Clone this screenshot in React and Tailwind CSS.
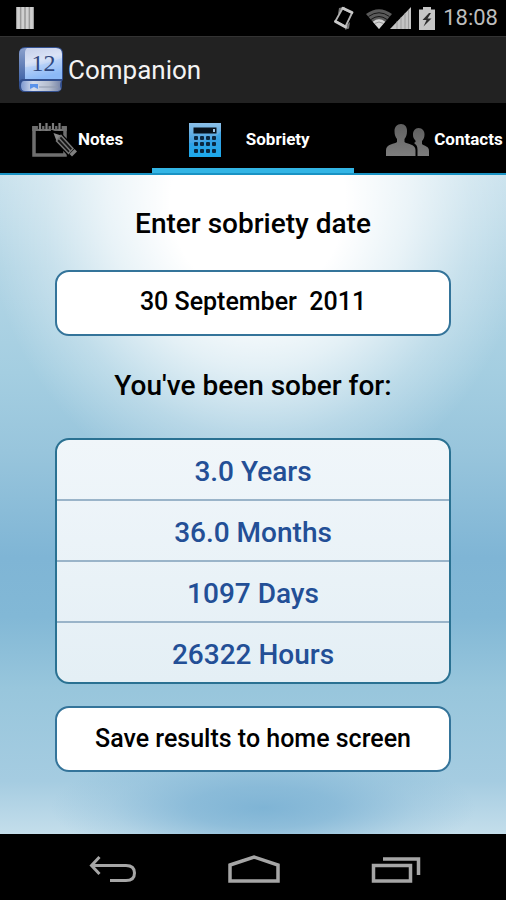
import { useState } from "react";

// ----------------- Data -----------------
const RESULTS = ["3.0 Years", "36.0 Months", "1097 Days", "26322 Hours"];

// ----------------- Status bar icons -----------------
const BarsIcon = () => (
  <svg viewBox="0 0 18 22" className="h-[22px] w-[18px]" aria-hidden="true">
    <rect width="18" height="22" fill="#9a9a9a" />
    <path d="M2.5 0v22M6.8 0v22M11.2 0v22M15.5 0v22" stroke="#d0d0d0" strokeWidth="2.8" />
  </svg>
);

const RotateIcon = () => (
  <svg viewBox="0 0 20 24" className="h-6 w-5" aria-hidden="true">
    <path d="M4 8 5 2l6-1.200L8 6zM16 16l-1 6.500-4 1.300 1-4z" fill="#777" />
    <path d="M8.500 2.500 18 7 11.500 20.500 1.500 15z" fill="#000" stroke="#b4b4b4" strokeWidth="1.800" strokeLinejoin="round" />
    <path d="M1.500 15.500 11.500 21M9 2.200 18 6.500" stroke="#cacaca" strokeWidth="2.800" strokeLinecap="round" />
  </svg>
);

const WifiIcon = () => (
  <svg viewBox="0 0 26 20" className="h-5 w-[26px]" aria-hidden="true">
    <path d="M0 5Q13-4.500 26 5L13 20z" fill="#5a5a5a" />
    <path d="M2.500 7.500Q13 0 23.500 7.500M5 10.500Q13 4.500 21 10.500" fill="none" stroke="#161616" strokeWidth="1" />
    <path d="M6.800 12.700Q13 8 19.200 12.700L13 20z" fill="#d4d4d4" />
    <path d="M8.500 14.500Q13 11.500 17.500 14.500" fill="none" stroke="#888" strokeWidth=".8" />
  </svg>
);

const SignalIcon = () => (
  <svg viewBox="0 0 21 22" className="-ml-0.5 h-[22px] w-[21px]" aria-hidden="true">
    <path d="M0 22 21 0v22z" fill="#c4c4c4" />
    <path d="M7 14.500V22M11 10.500V22M15 6.500V22M18.500 3V22" stroke="#9c9c9c" strokeWidth="1" />
  </svg>
);

const BatteryIcon = () => (
  <svg viewBox="0 0 16 23" className="h-[23px] w-4" aria-hidden="true">
    <path d="M4 0h8v2.500h4V23H0V2.500h4z" fill="#c6c6c6" />
    <path d="M10 6 3.500 13h4L4.500 19.500 12.500 11.500h-4L12 6z" fill="#2c2c2c" />
  </svg>
);

// ----------------- App and tab icons -----------------
const BookIcon = () => (
  <svg viewBox="0 0 46 46" className="h-[46px] w-[46px]" aria-hidden="true">
    <defs>
      <linearGradient id="cover" x1="0" y1="0" x2=".3" y2="1">
        <stop offset="0" stopColor="#c5cfea" />
        <stop offset=".45" stopColor="#dbe3f6" />
        <stop offset="1" stopColor="#8db9f5" />
      </linearGradient>
      <linearGradient id="spine" x1="0" y1="0" x2="0" y2="1">
        <stop offset="0" stopColor="#8ba0cc" />
        <stop offset="1" stopColor="#3f62a6" />
      </linearGradient>
      <linearGradient id="pages" x1="0" y1="0" x2="1" y2="0">
        <stop offset="0" stopColor="#7e98cf" />
        <stop offset=".3" stopColor="#d4dced" />
        <stop offset=".7" stopColor="#b4bccd" />
        <stop offset="1" stopColor="#7583a8" />
      </linearGradient>
    </defs>
    <path d="M7 0h31q7 0 7 7v25q-2 3-1 7 0 6-6 6H7q-6 0-6-6V7q0-7 6-7z" fill="#33508f" />
    <path d="M7 1h5v31H4q-2 0-3 3V7q0-6 6-6z" fill="url(#spine)" />
    <path d="M9 1h29q6 0 6 6v25H7V5q0-2 2-4z" fill="url(#cover)" />
    <path d="M9 20q18-2 35-9v21H7V20z" fill="#8cbcff" opacity=".25" />
    <path d="M6 34h37q-2 4 0 8-1 2-5 2H7q-4 0-4-5t3-5z" fill="url(#pages)" />
    <path d="M12 42v-5h8v5l-4-2z" fill="#5a92ea" />
    <path d="M21 40h19" stroke="#8f99ad" strokeWidth="1" />
    <text x="25.500" y="24" textAnchor="middle" fontSize="24" fill="#2f477f" className="font-['Liberation_Serif',serif]">
      12
    </text>
  </svg>
);

const NotesIcon = () => (
  <svg viewBox="0 0 46 34" className="h-[34px] w-[46px]" aria-hidden="true">
    <path d="M2 5h31v27H2z" fill="none" stroke="#6f6f6f" strokeWidth="3.500" />
    <path d="M.2 5.500h34.600" stroke="#6f6f6f" strokeWidth="5" />
    <path d="M8 0v6M14.500 0v6M21 0v6M27.500 0v6" stroke="#000" strokeWidth="4.200" />
    <path d="M8 0v8M14.500 0v8M21 0v8M27.500 0v8" stroke="#7c7c7c" strokeWidth="2.200" />
    <path d="M21 9 29 12 45 28 39 34 24 18z" fill="#000" stroke="#000" strokeWidth="3" />
    <path d="M21.500 10 29 12.500 24.500 18z" fill="#8a8a8a" />
    <path d="M29 12.500 41 25.500 36.500 30.500 24.500 18z" fill="#151515" stroke="#777" strokeWidth="1.500" />
    <path d="M27 15.500 38.500 28" stroke="#777" strokeWidth="1.500" />
    <path d="M42.500 26 45 28.500 40 33.500 37.500 31z" fill="#808080" />
  </svg>
);

const KEY_X = [6, 12, 18, 24];
const KEY_Y = [13, 19, 26];

const CalculatorIcon = () => (
  <svg viewBox="0 0 34 34" className="h-[34px] w-[34px]" aria-hidden="true">
    <defs>
      <linearGradient id="calc" x1="0" y1="0" x2="0" y2="1">
        <stop offset="0" stopColor="#8cc0e8" />
        <stop offset=".5" stopColor="#4aa4e2" />
        <stop offset="1" stopColor="#25b2ee" />
      </linearGradient>
    </defs>
    <rect x="1" width="32" height="34" fill="url(#calc)" />
    <path d="M1 20Q24 20 33 8V34H1z" fill="#0c9ce8" opacity=".35" />
    <rect x="5.500" y="4.500" width="23" height="6" fill="#07111b" />
    <rect x="25" y="6" width="2" height="3" fill="#9fc7e6" />
    {KEY_Y.map((y) =>
      KEY_X.map((x) => <rect key={`${x}-${y}`} x={x} y={y} width="4" height="4" rx="1" fill="#0a2740" />)
    )}
  </svg>
);

const ContactsIcon = () => (
  <svg viewBox="0 0 44 32" className="h-8 w-11" aria-hidden="true">
    <defs>
      <linearGradient id="people" x1="0" y1="0" x2="0" y2="1">
        <stop offset="0" stopColor="#606060" />
        <stop offset="1" stopColor="#7d7d7d" />
      </linearGradient>
    </defs>
    <path
      d="M15 0C19 0 21 3 21 7c0 4-1 6-2.500 8v3c2 2 11 2 11 8v6H0v-6c0-6 9-6 11-8v-3C9.500 13 8.500 11 8.500 7 8.500 3 11 0 15 0z"
      fill="url(#people)"
    />
    <path
      d="M32.500 4c4 0 6 3 6 6.500 0 3-1 5-2.500 6.500v3c2 2 7 2 7 7v5H31.500v-6c0-4-1-5-3.500-7 2-1 2-2 1-3-1.500-2-2-3-2-5.500 0-3.500 2-6.500 5.500-6.500z"
      fill="url(#people)"
    />
  </svg>
);

const TABS = [
  { name: "Notes", Icon: NotesIcon, layout: "pl-8 gap-0" },
  { name: "Sobriety", Icon: CalculatorIcon, layout: "pl-9 gap-6" },
  { name: "Contacts", Icon: ContactsIcon, layout: "pl-8 gap-1" },
];

// ----------------- Layout parts -----------------
const StatusBar = () => (
  <div className="flex h-9 items-center justify-between bg-black pl-4 pr-2">
    <BarsIcon />
    <div className="flex items-center">
      <RotateIcon />
      <div className="ml-3 flex items-end">
        <WifiIcon />
        <SignalIcon />
      </div>
      <div className="ml-2">
        <BatteryIcon />
      </div>
      <span className="ml-2 text-[22px] leading-9 text-[#bdbdbd]">18:08</span>
    </div>
  </div>
);

const TabBar = ({ active, onChange }) => (
  <nav className="grid h-[72px] grid-cols-[3fr_4fr_3fr] border-b-2 border-[#1a93c4] bg-black">
    {TABS.map(({ name, Icon, layout }) => (
      <button
        key={name}
        type="button"
        onClick={() => onChange(name)}
        aria-current={active === name ? "page" : undefined}
        className={`flex items-center border-b-[5px] pt-2 text-[17px] font-bold whitespace-nowrap text-white ${layout} ${
          active === name ? "border-[#33b5e5]" : "border-transparent"
        }`}
      >
        <Icon />
        {name}
      </button>
    ))}
  </nav>
);

const NavBar = () => (
  <div className="flex h-[66px] items-center justify-between bg-black pl-[89px] pr-[85px] pt-1">
    <button type="button" aria-label="Back">
      <svg viewBox="0 0 48 28" className="h-7 w-12" fill="none" stroke="#a6a6a6" strokeWidth="3">
        <path d="M10.500 2 2.500 10.500 10.500 19M3 10.500H37q8.500 0 8.500 7.500T37 25.500H21" />
      </svg>
    </button>
    <button type="button" aria-label="Home">
      <svg viewBox="0 0 54 28" className="h-7 w-[54px]" fill="none" stroke="#a6a6a6" strokeWidth="3.500">
        <path d="M3 10 27 2 51 10V26H3z" />
      </svg>
    </button>
    <button type="button" aria-label="Recent apps">
      <svg viewBox="0 0 50 28" className="h-7 w-[50px]" fill="none" stroke="#a6a6a6" strokeWidth="3.500">
        <path d="M2.500 10.500H39.500V26H2.500zM12 4H47.500V20" />
      </svg>
    </button>
  </div>
);

// ----------------- App -----------------
const App = () => {
  const [active, setActive] = useState("Sobriety");
  const [date, setDate] = useState("30 September  2011");

  return (
    <div className="flex min-h-screen flex-col bg-black font-[Roboto,sans-serif]">
      <StatusBar />

      <header className="flex h-[67px] items-center gap-1 border-t border-[#333] bg-[#222] pl-[18px]">
        <BookIcon />
        <h1 className="text-[26px] text-[#f3f3f3]">Companion</h1>
      </header>

      <TabBar active={active} onChange={setActive} />

      <main className="flex grow flex-col bg-[radial-gradient(ellipse_42%_9%_at_52%_96%,#7fb4d5_0%,#7fb4d5c0_35%,#7fb4d540_72%,#7fb4d500_100%),radial-gradient(ellipse_54%_46%_at_51%_4%,#fff_0%,#fff_32%,#ffffffb0_55%,#ffffff48_78%,#ffffff00_100%),linear-gradient(180deg,#c6e0ec_0%,#b2d5e5_14%,#a4cee1_30%,#98c5dc_42%,#7fb5d5_58%,#82b8d6_67%,#98c6dc_78%,#a5cce1_92%,#c4deeb_100%)] px-[55px] pt-[29px] pb-[62px] text-center font-medium text-black">
        <label htmlFor="sobriety-date" className="text-[28px] leading-10">
          Enter sobriety date
        </label>
        <input
          id="sobriety-date"
          type="text"
          value={date}
          onChange={(e) => setDate(e.target.value)}
          className="mt-[26px] h-[66px] w-full rounded-[14px] border-2 border-[#34749a] bg-white pb-1 text-center text-[25px] outline-none"
        />

        <h2 className="mt-[30px] text-[28px] leading-10 font-medium">You've been sober for:</h2>
        <ul className="mt-8 divide-y-2 divide-[#9ab4c9] rounded-[14px] border-2 border-[#2a7192] bg-linear-to-b from-[#f0f6fa] to-[#e4eff5] text-[28px] text-[#234f96]">
          {RESULTS.map((result) => (
            <li key={result} className="flex h-[61px] items-center justify-center pt-1 last:h-[59px]">
              {result}
            </li>
          ))}
        </ul>

        <button type="button" className="mt-[22px] h-[66px] w-full rounded-[14px] border-2 border-[#34749a] bg-white text-[25px]">
          Save results to home screen
        </button>
      </main>

      <NavBar />
    </div>
  );
};

export default App;
